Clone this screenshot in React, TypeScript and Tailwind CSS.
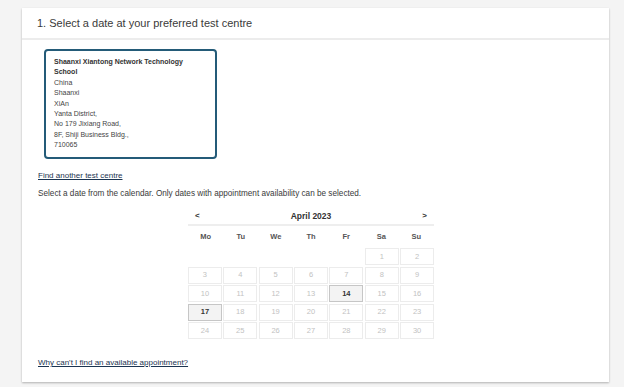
const ADDRESS = [
  "China",
  "Shaanxi",
  "XiAn",
  "Yanta District,",
  "No 179 Jixiang Road,",
  "8F, Shiji Business Bldg.,",
  "710065",
];

const DAYS = ["Mo", "Tu", "We", "Th", "Fr", "Sa", "Su"];

// April 2023 starts on a Saturday → 5 blanks in the first row
const CELLS: (number | null)[] = [
  null, null, null, null, null,
  ...Array.from({ length: 30 }, (_, i) => i + 1),
];

const AVAILABLE = [14, 17];

export default function App() {
  return (
    <div
      className="h-[387px] w-[624px] bg-[#f4f4f4] pt-[8px] pl-[22px] overflow-hidden"
      style={{ fontFamily: '"Liberation Sans", Arial, sans-serif' }}
    >
      <div className="w-[587px] h-[374px] bg-white shadow-[0_1px_2px_rgba(0,0,0,0.28)] flex flex-col">
        {/* Cabecera */}
        <div className="h-[32px] flex items-center px-[15px] border-b-2 border-[#ececec]">
          <h2 className="text-[11px] text-[#3a3a3a] leading-none">
            1. Select a date at your preferred test centre
          </h2>
        </div>

        <div className="px-[16px] pt-[9px] flex flex-col">
          {/* Centro seleccionado */}
          <div className="ml-[6px] w-[173px] h-[110px] border-2 border-[#245b78] rounded-[4px] px-[8px] pt-[6px] text-[7px] leading-[10.4px] text-[#444]">
            <p className="font-bold text-[#333] w-[140px]">
              Shaanxi Xiantong Network Technology School
            </p>
            {ADDRESS.map((line) => (
              <p key={line}>{line}</p>
            ))}
          </div>

          <a
            href="#"
            className="mt-[12px] self-start text-[8px] leading-[10px] text-[#1b3451] underline"
          >
            Find another test centre
          </a>
          <p className="mt-[8px] text-[8.2px] leading-[10px] text-[#3a3a3a]">
            Select a date from the calendar. Only dates with appointment availability can be selected.
          </p>

          {/* Calendario */}
          <div className="ml-[150px] mt-[9px] w-[246px]">
            <div className="h-[18px] flex items-center justify-between px-[7px] border-b-2 border-[#eeeeee] text-[8px] font-bold text-[#333]">
              <span>&lt;</span>
              <span className="text-[8.5px]">April 2023</span>
              <span>&gt;</span>
            </div>
            <div className="grid grid-cols-7 h-[21px] mb-[1px] items-center text-[7.5px] font-bold text-[#555] text-center">
              {DAYS.map((d) => (
                <span key={d}>{d}</span>
              ))}
            </div>
            <div className="grid grid-cols-7 gap-[1.5px]">
              {CELLS.map((n, i) =>
                n === null ? (
                  <div key={"e" + i} className="h-[17px]" />
                ) : AVAILABLE.includes(n) ? (
                  <div
                    key={n}
                    className="h-[17px] flex items-center justify-center border border-[#c6c6c6] bg-[#f3f3f3] text-[7.5px] font-bold text-[#333]"
                  >
                    {n}
                  </div>
                ) : (
                  <div
                    key={n}
                    className="h-[17px] flex items-center justify-center border border-[#ececec] text-[7.5px] text-[#c2c2c2]"
                  >
                    {n}
                  </div>
                )
              )}
            </div>
          </div>

          <a
            href="#"
            className="mt-[19px] self-start text-[8px] leading-[10px] text-[#1b3451] underline"
          >
            Why can't I find an available appointment?
          </a>
        </div>
      </div>
    </div>
  );
}
